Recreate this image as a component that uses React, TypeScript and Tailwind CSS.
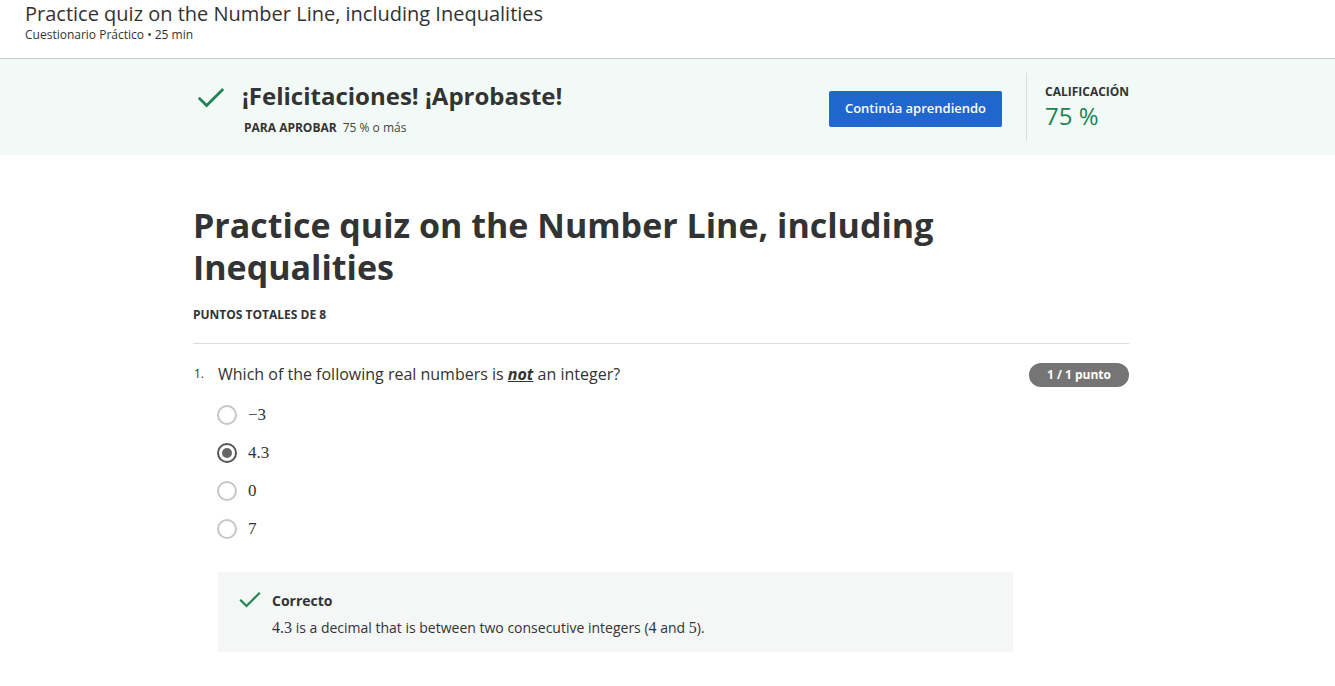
import React from 'react'

const font = { fontFamily: '"Open Sans", "Liberation Sans", sans-serif' }
const math = { fontFamily: '"Liberation Serif", "DejaVu Serif", serif' }

const Check = ({ size = 28 }: { size?: number }) => (
  <svg width={size} height={size} viewBox="0 0 24 24" fill="none">
    <path d="M3 12.5l5.5 5.5L21 5.5" stroke="#1f8354" strokeWidth="2.2" strokeLinecap="square" />
  </svg>
)

const Radio = ({ checked }: { checked?: boolean }) => (
  <span
    className={
      checked
        ? 'w-5 h-5 rounded-full border-2 border-[#555] flex items-center justify-center'
        : 'w-5 h-5 rounded-full border-2 border-[#c6c6c6]'
    }
  >
    {checked && <span className="w-[10px] h-[10px] rounded-full bg-[#666]" />}
  </span>
)

const options = [
  { id: 1, label: '−3' },
  { id: 2, label: '4.3', checked: true },
  { id: 3, label: '0' },
  { id: 4, label: '7' },
]

const App = () => {
  return (
    <div className="min-h-screen bg-white text-[#333]" style={font}>
      <header className="h-[59px] border-b border-[#c7cccc] pl-[25px] pt-[1px]">
        <h2 className="text-[20px] leading-[26px] text-[#333]">
          Practice quiz on the Number Line, including Inequalities
        </h2>
        <p className="text-[12px] leading-[16px] text-[#333]">Cuestionario Práctico • 25 min</p>
      </header>

      <section className="bg-[#f2faf7] h-[96px]">
        <div className="w-[936px] ml-[193px] flex items-center h-full">
          <div className="flex-1 flex items-start pt-[2px]">
            <div className="mt-[2px] ml-[3px]">
              <Check size={30} />
            </div>
            <div className="ml-[16px]">
              <h3 className="text-[24px] leading-[30px] font-bold text-[#333]">¡Felicitaciones! ¡Aprobaste!</h3>
              <p className="text-[12px] leading-[16px] mt-[9px] ml-[2px]">
                <span className="font-bold">PARA APROBAR</span>
                <span className="ml-[6px] text-[#444]">75 % o más</span>
              </p>
            </div>
          </div>
          <button className="bg-[#1f66cf] text-white text-[13px] font-semibold w-[173px] h-[36px] rounded-[2px] mt-[4px]">
            Continúa aprendiendo
          </button>
          <div className="w-px h-[68px] bg-[#dcdede] ml-[24px]" />
          <div className="ml-[18px] w-[84px] pb-[1px]">
            <p className="text-[12px] leading-[18px] font-bold text-[#333]">CALIFICACIÓN</p>
            <p className="text-[24px] leading-[30px] text-[#1f8354]">75 %</p>
          </div>
        </div>
      </section>

      <main className="w-[936px] ml-[193px] pt-[49px]">
        <h1 className="text-[34px] leading-[42px] font-bold text-[#333] max-w-[780px]">
          Practice quiz on the Number Line, including Inequalities
        </h1>
        <p className="text-[12px] font-bold mt-[19px] leading-[16px]">PUNTOS TOTALES DE 8</p>
        <div className="border-b border-[#dcdede] mt-[20px]" />

        <div className="flex items-start mt-[19px]">
          <span className="text-[12px] leading-[22px] w-[25px] pl-[1px]">1.</span>
          <p className="flex-1 text-[16px] leading-[22px] text-[#333]">
            Which of the following real numbers is{' '}
            <span className="font-bold italic underline">not</span> an integer?
          </p>
          <span className="bg-[#757575] text-white text-[12px] font-bold rounded-full w-[100px] h-[24px] flex items-center justify-center">
            1 / 1 punto
          </span>
        </div>

        <div className="ml-[24px] mt-[18px] flex flex-col gap-[18px]">
          {options.map((o) => (
            <div key={o.id} className="flex items-center h-[20px]">
              <Radio checked={o.checked} />
              <span className="ml-[11px] text-[17px] text-[#333]" style={math}>
                {o.label}
              </span>
            </div>
          ))}
        </div>

        <div className="ml-[25px] mt-[33px] w-[795px] h-[80px] bg-[#f5f7f7] pl-[20px] pt-[16px]">
          <div className="flex items-center">
            <Check size={24} />
            <span className="ml-[10px] text-[14px] font-bold">Correcto</span>
          </div>
          <p className="ml-[34px] mt-[4px] text-[14px] text-[#333]">
            <span className="text-[16px]" style={math}>4.3</span> is a decimal that is between two consecutive integers (
            <span className="text-[16px]" style={math}>4</span> and{' '}
            <span className="text-[16px]" style={math}>5</span>).
          </p>
        </div>
      </main>
    </div>
  )
}

export default App
